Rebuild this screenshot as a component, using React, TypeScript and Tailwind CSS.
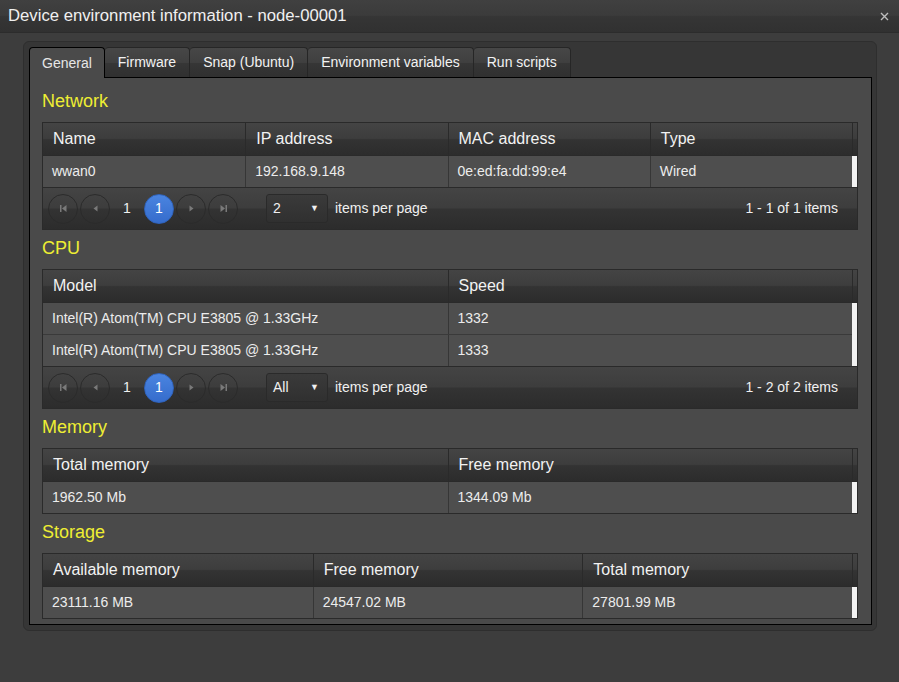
import React from "react";

const glass =
  "bg-[linear-gradient(to_bottom,#444444_0%,#3d3d3d_48%,#333333_52%,#2c2c2c_100%)]";

function Icon({ kind }: { kind: "first" | "prev" | "next" | "last" }) {
  return (
    <svg width="9" height="9" viewBox="0 0 9 9" fill="#7a7a7a">
      {kind === "first" && (
        <>
          <rect x="1" y="1" width="1.5" height="7" />
          <path d="M7.5 1 L3 4.5 L7.5 8 Z" />
        </>
      )}
      {kind === "prev" && <path d="M6.5 1.5 L2.5 4.5 L6.5 7.5 Z" />}
      {kind === "next" && <path d="M2.5 1.5 L6.5 4.5 L2.5 7.5 Z" />}
      {kind === "last" && (
        <>
          <path d="M1.5 1 L6 4.5 L1.5 8 Z" />
          <rect x="6.5" y="1" width="1.5" height="7" />
        </>
      )}
    </svg>
  );
}

function NavBtn({ kind }: { kind: "first" | "prev" | "next" | "last" }) {
  return (
    <div className="flex h-[30px] w-[30px] items-center justify-center rounded-full border border-[#2b2b2b]">
      <Icon kind={kind} />
    </div>
  );
}

function Pager({ size, info }: { size: string; info: string }) {
  return (
    <div className={`flex h-[42px] items-center border-t border-[#2a2a2a] pl-[5px] pr-[19px] ${glass}`}>
      <div className="flex items-center gap-[2px]">
        <NavBtn kind="first" />
        <NavBtn kind="prev" />
        <div className="flex h-[30px] w-[30px] items-center justify-center text-[14px] text-[#f0f0f0]">1</div>
        <div className="flex h-[30px] w-[30px] items-center justify-center rounded-full border border-[#2f63bd] bg-[linear-gradient(to_bottom,#4a84e0,#356ccc)] text-[14px] text-white">
          1
        </div>
        <NavBtn kind="next" />
        <NavBtn kind="last" />
      </div>
      <div className="ml-[28px] flex h-[29px] w-[62px] items-center justify-between rounded-[3px] border border-[#2a2a2a] bg-[linear-gradient(to_bottom,#3a3a3a,#303030)] pl-[6px] pr-[8px] text-[14px] text-[#f0f0f0]">
        <span>{size}</span>
        <span className="text-[9px]">▼</span>
      </div>
      <span className="ml-[7px] text-[14px] text-[#f0f0f0]">items per page</span>
      <span className="ml-auto text-[14px] text-[#f0f0f0]">{info}</span>
    </div>
  );
}

function Table({
  cols,
  rows,
  grid,
  pager,
}: {
  cols: string[];
  rows: string[][];
  grid: string;
  pager?: { size: string; info: string };
}) {
  return (
    <div className="border border-[#2a2a2a]">
      <div className={`flex h-[33px] border-b border-[#2a2a2a] ${glass}`}>
        <div className={`grid flex-1 ${grid}`}>
          {cols.map((c, i) => (
            <div
              key={i}
              className={`flex items-center pl-[10px] text-[16px] text-[#f2f2f2] ${
                i > 0 ? "border-l border-[#2a2a2a]" : ""
              }`}
            >
              {c}
            </div>
          ))}
        </div>
        <div className="w-[5px] border-l border-[#2a2a2a]" />
      </div>
      <div className="flex">
        <div className="flex-1">
          {rows.map((r, ri) => (
            <div
              key={ri}
              className={`grid ${grid} bg-[#4e4e4e] ${ri > 0 ? "h-[32px] border-t border-[#3a3a3a]" : "h-[31px]"}`}
            >
              {r.map((c, ci) => (
                <div
                  key={ci}
                  className={`flex items-center pl-[9px] text-[14px] text-[#ececec] ${
                    ci > 0 ? "border-l border-[#363636]" : ""
                  }`}
                >
                  {c}
                </div>
              ))}
            </div>
          ))}
        </div>
        <div className="w-[5px] bg-[#f2f2f2]" />
      </div>
      {pager && <Pager size={pager.size} info={pager.info} />}
    </div>
  );
}

function Heading({ children, first }: { children: React.ReactNode; first?: boolean }) {
  return (
    <div
      className={`flex items-end pb-[10px] text-[18px] leading-[21px] text-[#eeee33] ${
        first ? "h-[44px]" : "h-[39px]"
      }`}
    >
      {children}
    </div>
  );
}

export default function App() {
  const tabs = ["General", "Firmware", "Snap (Ubuntu)", "Environment variables", "Run scripts"];
  return (
    <div className="h-[682px] w-[899px] overflow-hidden bg-[#3d3d3d] font-['Liberation_Sans',Arial,sans-serif]">
      <div className="relative flex h-[33px] items-center border-b border-[#2c2c2c] bg-[linear-gradient(to_bottom,#404040_0%,#3b3b3b_48%,#353535_52%,#313131_100%)] pl-[8px] text-[16.7px] text-[#f0f0f0]">
        Device environment information - node-00001
        <svg
          className="absolute right-[10px] top-[12px]"
          width="9"
          height="9"
          viewBox="0 0 9 9"
          stroke="#bdbdbd"
          strokeWidth="1.4"
        >
          <path d="M1 1 L8 8 M8 1 L1 8" />
        </svg>
      </div>
      <div className="pt-[8px]">
        <div className="ml-[23px] w-[854px] rounded-[6px] border border-[#2e2e2e] bg-[#363636] pb-[5px] pl-[5px] pr-[4px] pt-[5px]">
          <div className="flex h-[30px]">
            {tabs.map((t, i) =>
              i === 0 ? (
                <div
                  key={t}
                  className="relative z-10 -mb-px flex h-[31px] items-center rounded-t-[4px] border-l border-r border-t border-black bg-[#4a4a4a] px-[12px] text-[14px] text-[#e6e6e6]"
                >
                  {t}
                </div>
              ) : (
                <div
                  key={t}
                  className="flex h-[30px] items-center rounded-t-[4px] border-r border-t border-[#262626] bg-[linear-gradient(to_bottom,#474747_0%,#3f3f3f_50%,#363636_52%,#303030_100%)] px-[13px] text-[14px] text-[#f2f2f2]"
                >
                  {t}
                </div>
              )
            )}
          </div>
          <div className="border border-black bg-[#4a4a4a] pb-[5px] pl-[12px] pr-[13px]">
            <Heading first>Network</Heading>
            <Table
              grid="grid-cols-4"
              cols={["Name", "IP address", "MAC address", "Type"]}
              rows={[["wwan0", "192.168.9.148", "0e:ed:fa:dd:99:e4", "Wired"]]}
              pager={{ size: "2", info: "1 - 1 of 1 items" }}
            />
            <Heading>CPU</Heading>
            <Table
              grid="grid-cols-2"
              cols={["Model", "Speed"]}
              rows={[
                ["Intel(R) Atom(TM) CPU E3805 @ 1.33GHz", "1332"],
                ["Intel(R) Atom(TM) CPU E3805 @ 1.33GHz", "1333"],
              ]}
              pager={{ size: "All", info: "1 - 2 of 2 items" }}
            />
            <Heading>Memory</Heading>
            <Table
              grid="grid-cols-2"
              cols={["Total memory", "Free memory"]}
              rows={[["1962.50 Mb", "1344.09 Mb"]]}
            />
            <Heading>Storage</Heading>
            <Table
              grid="grid-cols-3"
              cols={["Available memory", "Free memory", "Total memory"]}
              rows={[["23111.16 MB", "24547.02 MB", "27801.99 MB"]]}
            />
          </div>
        </div>
      </div>
    </div>
  );
}
